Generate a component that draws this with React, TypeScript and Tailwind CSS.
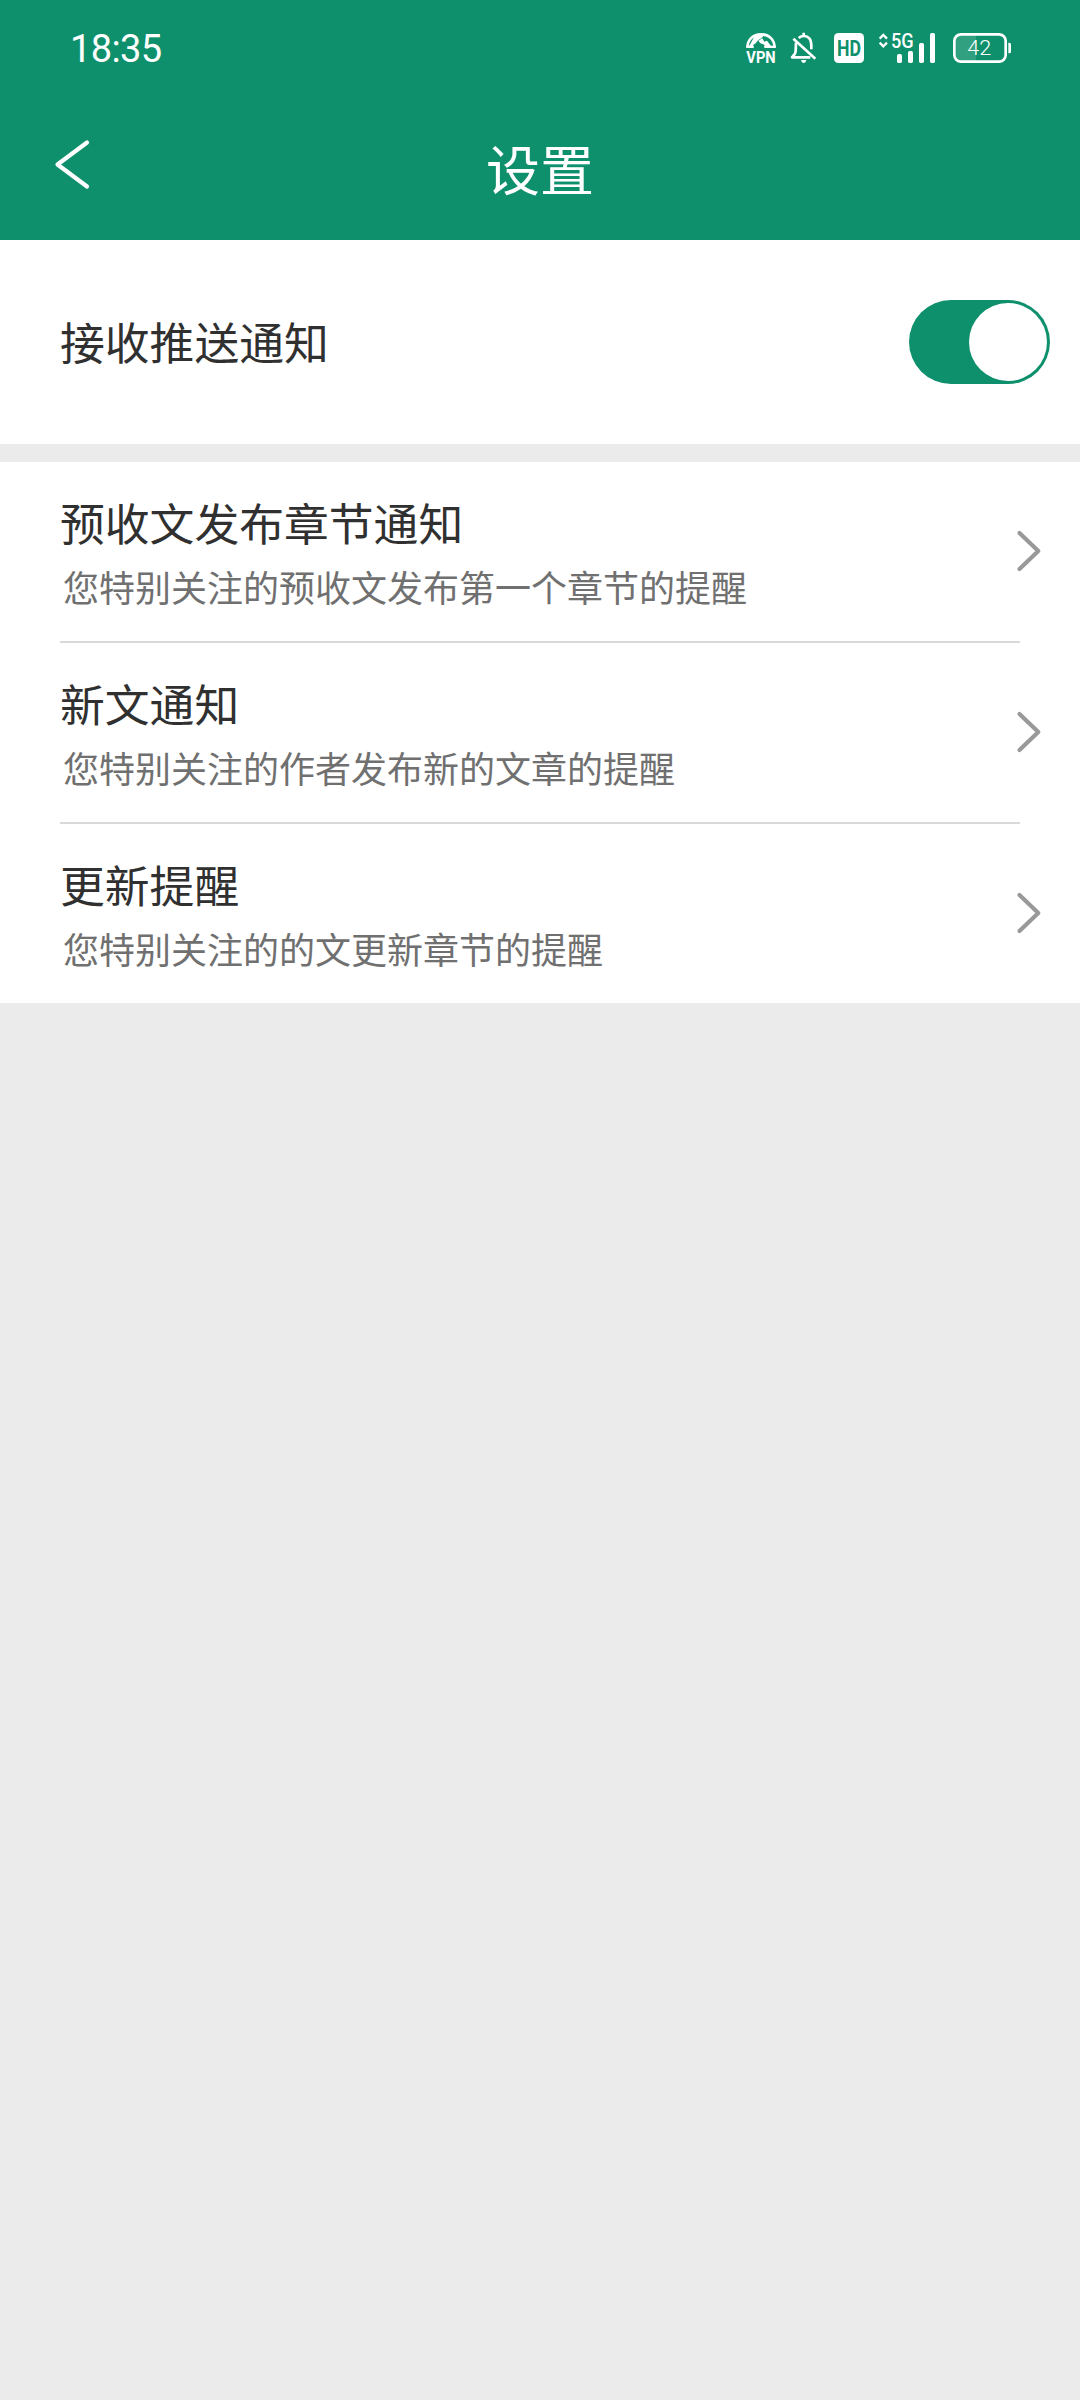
import { useState } from "react";

const rows = [
  {
    id: 1,
    title: "预收文发布章节通知",
    description: "您特别关注的预收文发布第一个章节的提醒",
  },
  {
    id: 2,
    title: "新文通知",
    description: "您特别关注的作者发布新的文章的提醒",
  },
  {
    id: 3,
    title: "更新提醒",
    description: "您特别关注的的文更新章节的提醒",
  },
];

function VpnIcon() {
  return (
    <svg viewBox="0 0 96 96" className="w-8 h-8 overflow-visible">
      <path
        d="M7 47C8 22 24 7 48 7s40 15 41 40"
        fill="none"
        stroke="currentColor"
        strokeWidth="8"
      />
      <path
        d="M30 10 60 6 50 18 40 24 32 34 25 38 24 48H8l8-12z"
        fill="currentColor"
      />
      <path
        d="M40 26 52 19 58 29 66 26 80 44 60 48 58 38 46 34z"
        fill="currentColor"
      />
      <path d="M4 41h22v7H4zM58 41h34v7H58z" fill="currentColor" />
      <text
        x="4"
        y="93"
        textLength="88"
        lengthAdjust="spacingAndGlyphs"
        fill="currentColor"
        className="font-['Roboto'] font-bold text-[52px]"
      >
        VPN
      </text>
    </svg>
  );
}

function BellOffIcon() {
  return (
    <svg
      viewBox="0 0 84 96"
      fill="none"
      stroke="currentColor"
      strokeWidth="8"
      className="w-7 h-8"
    >
      <path d="M41 2v9M26 18C36 9 50 11 58 19c6 7 6 14 6 24v9" />
      <path d="M18 32c-1 17 0 28-3 33l-9 11h55" strokeLinejoin="round" />
      <path d="M10 20 76 80" />
      <path d="M33 84h16c-2 12-14 12-16 0z" fill="currentColor" stroke="none" />
    </svg>
  );
}

function HdIcon() {
  return (
    <svg viewBox="0 0 96 96" className="w-8 h-8 overflow-visible">
      <rect x="3" y="3" width="90" height="90" rx="13" fill="currentColor" />
      <text
        x="12"
        y="71"
        textLength="72"
        lengthAdjust="spacingAndGlyphs"
        className="fill-[#0e906c] font-['Roboto'] font-bold text-[66px]"
      >
        HD
      </text>
    </svg>
  );
}

function SignalIcon() {
  return (
    <svg viewBox="0 0 174 96" className="w-[58px] h-8 overflow-visible">
      <path
        d="M5 20 16 9l11 11M5 32l11 11 11-11"
        fill="none"
        stroke="currentColor"
        strokeWidth="7"
      />
      <text
        x="39"
        y="47"
        textLength="68"
        lengthAdjust="spacingAndGlyphs"
        fill="currentColor"
        className="font-['Roboto'] font-medium text-[60px]"
      >
        5G
      </text>
      <g fill="currentColor">
        <rect x="57" y="66" width="15" height="27" rx="5" />
        <rect x="90" y="57" width="15" height="36" rx="5" />
        <rect x="123" y="33" width="15" height="60" rx="5" />
        <rect x="156" y="3" width="15" height="90" rx="5" />
      </g>
    </svg>
  );
}

function BatteryIcon() {
  return (
    <svg viewBox="0 0 180 96" className="w-[60px] h-8">
      <path d="M25 7h47v82H25Q8 89 8 70V26Q8 7 25 7z" fill="#fff" opacity="0.15" />
      <rect
        x="7"
        y="7"
        width="154"
        height="82"
        rx="20"
        fill="none"
        stroke="currentColor"
        strokeWidth="8"
      />
      <path d="M169 32h3q5 0 5 5v22q0 5-5 5h-3z" fill="currentColor" />
      <text
        x="46"
        y="69"
        textLength="72"
        lengthAdjust="spacingAndGlyphs"
        fill="currentColor"
        className="font-['Roboto'] font-light text-[62px]"
      >
        42
      </text>
    </svg>
  );
}

function StatusBar() {
  return (
    <div className="flex items-center justify-between h-24 pl-[70px] pr-[68px]">
      <span className="pt-0.5 font-['Roboto'] text-[38px] leading-none tracking-[-0.6px]">
        18:35
      </span>
      <div className="flex items-center">
        <VpnIcon />
        <div className="ml-[13px]">
          <BellOffIcon />
        </div>
        <div className="ml-[15px]">
          <HdIcon />
        </div>
        <div className="ml-[13px]">
          <SignalIcon />
        </div>
        <div className="ml-4">
          <BatteryIcon />
        </div>
      </div>
    </div>
  );
}

function SettingRow(props: { title: string; description: string }) {
  return (
    <div className="flex items-start justify-between h-[179px] pl-[60px] pr-[38px]">
      <div className="pt-7">
        <p className="text-[44.8px] leading-[64px] text-[#303030]">
          {props.title}
        </p>
        <p className="pl-[3px] text-[36px] leading-[64px] text-[#707070]">
          {props.description}
        </p>
      </div>
      <svg
        viewBox="0 0 26 44"
        fill="none"
        stroke="#999"
        strokeWidth="4.2"
        strokeLinecap="round"
        strokeLinejoin="round"
        className="w-[26px] h-11 mt-[67px]"
      >
        <path d="M3.5 4 22.3 22 3.5 40" />
      </svg>
    </div>
  );
}

export default function App() {
  const [push, setPush] = useState(true);

  return (
    <div className="w-[1080px] h-[2400px] bg-[#ebebeb] font-['Noto_Sans_CJK_SC',sans-serif]">
      <header className="h-60 bg-[#0e906c] text-white">
        <StatusBar />
        <div className="grid grid-cols-3 h-36 px-[54px]">
          <button className="w-9 h-[52px] mt-[42px]">
            <svg
              viewBox="0 0 36 52"
              fill="none"
              stroke="currentColor"
              strokeWidth="4.2"
              strokeLinecap="round"
              strokeLinejoin="round"
              className="w-9 h-[52px]"
            >
              <path d="M33 4.5 3.5 26.5 33 48.5" />
            </svg>
          </button>
          <h1 className="pt-8 text-center text-[54px] leading-[80px]">设置</h1>
        </div>
      </header>

      <div className="flex items-center justify-between h-[204px] pl-[60px] pr-[30px] bg-white">
        <p className="pb-[3px] text-[44.8px] leading-[64px] text-[#303030]">
          接收推送通知
        </p>
        <button
          onClick={() => setPush(!push)}
          className={
            push
              ? "flex items-center justify-end w-[141px] h-[84px] p-[3px] rounded-full bg-[#0e906c]"
              : "flex items-center justify-start w-[141px] h-[84px] p-[3px] rounded-full bg-[#cccccc]"
          }
        >
          <span className="w-[78px] h-[78px] rounded-full bg-white" />
        </button>
      </div>

      <div className="mt-[18px] bg-white">
        {rows.map((item, index) => (
          <div key={item.id}>
            {index > 0 && <div className="h-0.5 mx-[60px] bg-[#d9d9d9]" />}
            <SettingRow title={item.title} description={item.description} />
          </div>
        ))}
      </div>
    </div>
  );
}
